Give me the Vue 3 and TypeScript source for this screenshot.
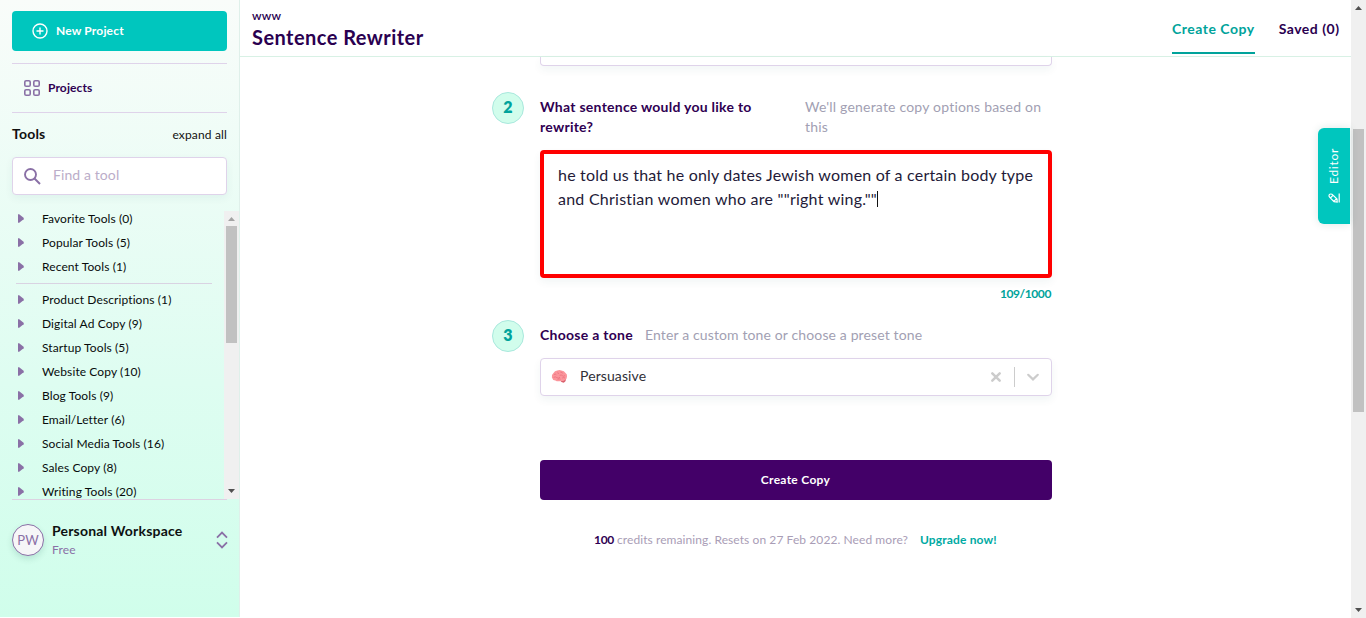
<script setup lang="ts">
import { ref } from 'vue'

interface ToolGroup {
  name: string
  count: number
}

const pinned: ToolGroup[] = [
  { name: 'Favorite Tools', count: 0 },
  { name: 'Popular Tools', count: 5 },
  { name: 'Recent Tools', count: 1 },
]

const groups: ToolGroup[] = [
  { name: 'Product Descriptions', count: 1 },
  { name: 'Digital Ad Copy', count: 9 },
  { name: 'Startup Tools', count: 5 },
  { name: 'Website Copy', count: 10 },
  { name: 'Blog Tools', count: 9 },
  { name: 'Email/Letter', count: 6 },
  { name: 'Social Media Tools', count: 16 },
  { name: 'Sales Copy', count: 8 },
  { name: 'Writing Tools', count: 20 },
]

const lines: string[] = [
  'he told us that he only dates Jewish women of a certain body type',
  'and Christian women who are ""right wing.""',
]
const used = ref<number>(109)
</script>

<template>
  <div class="page">
    <aside class="sidebar">
      <button class="new-project">
        <svg width="16" height="16" viewBox="0 0 16 16" fill="none" stroke="#fff" stroke-width="1.4">
          <circle cx="8" cy="8" r="7" />
          <path d="M8 4.5v7M4.5 8h7" />
        </svg>
        <span class="t-new">New Project</span>
      </button>

      <div class="projects">
        <svg width="16" height="16" viewBox="0 0 16 16" fill="none" stroke="#8a70a6" stroke-width="1.6">
          <rect x="0.8" y="0.8" width="5.4" height="5.4" rx="1.3" />
          <rect x="9.8" y="0.8" width="5.4" height="5.4" rx="1.3" />
          <rect x="0.8" y="9.8" width="5.4" height="5.4" rx="1.3" />
          <rect x="9.8" y="9.8" width="5.4" height="5.4" rx="1.3" />
        </svg>
        <span class="t-projects">Projects</span>
      </div>

      <div class="tools-head">
        <span class="t-tools">Tools</span>
        <span class="t-expand">expand all</span>
      </div>

      <div class="search">
        <svg width="17" height="17" viewBox="0 0 17 17" fill="none" stroke="#8a70a6" stroke-width="1.9">
          <circle cx="6.5" cy="6.5" r="5.5" />
          <path d="M10.5 10.5L16 16" />
        </svg>
        <span class="t-find">Find a tool</span>
      </div>

      <div class="tool-area">
        <div class="tool-list">
          <div v-for="g in pinned" :key="g.name" class="row">
            <svg width="6" height="9" viewBox="0 0 6 9"><path d="M0 0.3Q0.6 0 1.2 0.3L5.6 3.7Q6 4.5 5.6 5.3L1.2 8.7Q0.6 9 0 8.7Z" fill="#8a70a6" /></svg>
            <span>{{ g.name }} ({{ g.count }})</span>
          </div>
          <div class="rule"></div>
          <div v-for="g in groups" :key="g.name" class="row">
            <svg width="6" height="9" viewBox="0 0 6 9"><path d="M0 0.3Q0.6 0 1.2 0.3L5.6 3.7Q6 4.5 5.6 5.3L1.2 8.7Q0.6 9 0 8.7Z" fill="#8a70a6" /></svg>
            <span>{{ g.name }} ({{ g.count }})</span>
          </div>
        </div>
        <div class="bar">
          <svg class="arrow" width="15" height="15" viewBox="0 0 15 15"><path d="M4 10L7.5 6L11 10Z" fill="#a3a3a3" /></svg>
          <div class="thumb side-thumb"></div>
          <div class="fill"></div>
          <svg class="arrow" width="15" height="15" viewBox="0 0 15 15"><path d="M4 5L7.5 9L11 5Z" fill="#505050" /></svg>
        </div>
      </div>

      <div class="workspace">
        <div class="avatar">PW</div>
        <div class="ws-text">
          <span class="t-ws">Personal Workspace</span>
          <span class="t-free">Free</span>
        </div>
        <svg class="switch" width="12" height="18" viewBox="0 0 12 18" fill="none" stroke="#8a70a6" stroke-width="1.8">
          <path d="M1 6.6L6 1.6L11 6.6M1 11.4L6 16.4L11 11.4" />
        </svg>
      </div>
    </aside>

    <main class="main">
      <header class="header">
        <div class="titles">
          <span class="t-www">www</span>
          <span class="t-title">Sentence Rewriter</span>
        </div>
        <nav class="tabs">
          <span class="tab active">Create Copy</span>
          <span class="tab saved">Saved (0)</span>
        </nav>
      </header>

      <section class="form">
        <div class="prev-input"></div>

        <div class="step step-two">
          <div class="num">2</div>
          <div class="label t-q">What sentence would you like to<br />rewrite?</div>
          <div class="hint t-q-hint">We'll generate copy options based on<br />this</div>
        </div>
        <div class="textarea">
          <div class="line l1">{{ lines[0] }}</div>
          <div class="line l2">{{ lines[1] }}<i class="caret"></i></div>
        </div>
        <div class="counter"><span>{{ used }}/1000</span></div>

        <div class="step step-three">
          <div class="num">3</div>
          <div class="label t-tone">Choose a tone</div>
          <div class="hint t-tone-hint">Enter a custom tone or choose a preset tone</div>
        </div>
        <div class="select">
          <svg class="brain" width="17" height="15" viewBox="0 0 17 15">
            <path d="M10 10.5L14.8 9.8Q15.2 12.6 12.6 13.8Q10.2 13.6 9 11.6Z" fill="#d9606d" />
            <path d="M0.9 8.4Q0.3 5.6 2.5 4Q3.6 1.8 6.3 1.6Q8.2 0.7 10.4 1.4Q13.4 1.6 14.3 3.7Q16.6 5 16 7.7Q16 10.4 13.6 11.2Q11.7 12.5 9.8 11.9Q6.5 13 4.4 11.5Q1.4 11 0.9 8.4Z" fill="#fb959b" />
            <path d="M3 5.5Q4.4 4.6 5.4 5.8M6.4 3.1Q7.6 3.6 7.3 5M9.4 3.1Q11.4 2.8 11.6 4.5M2.6 8.4Q4.4 7.2 5.8 8.6T9 8.2M8.6 6.3Q10.4 5.5 11.6 6.8T14 6.4M6.6 10.4Q8.2 9.4 9.6 10.2M11.2 9Q12.6 8.2 14 9" fill="none" stroke="#e86c79" stroke-width="0.7" />
          </svg>
          <span class="t-persuasive">Persuasive</span>
          <div class="controls">
            <svg width="12" height="12" viewBox="0 0 12 12" stroke="#ccc" stroke-width="2.5" stroke-linecap="round"><path d="M2.3 2.3L9.7 9.7M9.7 2.3L2.3 9.7" /></svg>
            <div class="sep"></div>
            <svg class="chev" width="14" height="10" viewBox="0 0 14 10" fill="none" stroke="#ccc" stroke-width="2.2" stroke-linecap="round"><path d="M2.2 2.8L7 7.4L11.8 2.8" /></svg>
          </div>
        </div>

        <button class="create"><span>Create Copy</span></button>

        <p class="credits">
          <b>100</b><span class="t-credits">credits remaining. Resets on 27 Feb 2022. Need more?</span><a>Upgrade now!</a>
        </p>
      </section>

      <div class="editor-tab">
        <span>Editor</span>
        <svg width="12" height="10" viewBox="0 0 12 10" fill="none" stroke="#fff" stroke-width="1.2">
          <path d="M1 2.6Q1 1 2.8 1Q4 1 5 2.2L9 6L9.2 9L6 8.6L1.8 4.4Q1 3.6 1 2.6ZM5.2 2.2L2.4 5M8.6 5.6L5.8 8.4" />
          <path d="M11.2 0.5V9.5" />
        </svg>
      </div>
    </main>

    <div class="bar page-bar">
      <svg class="arrow" width="15" height="15" viewBox="0 0 15 15"><path d="M4 10L7.5 6L11 10Z" fill="#505050" /></svg>
      <div class="gap"></div>
      <div class="thumb main-thumb"></div>
      <div class="fill"></div>
      <svg class="arrow" width="15" height="15" viewBox="0 0 15 15"><path d="M4 5L7.5 9L11 5Z" fill="#505050" /></svg>
    </div>
  </div>
</template>

<style>
html,
body {
  margin: 0;
  overflow: hidden;
  background: #fff;
}
</style>

<style scoped>
.page {
  display: flex;
  width: 1366px;
  height: 618px;
  overflow: hidden;
  font-family: Lato, "Open Sans", sans-serif;
  font-variant-ligatures: none;
  color: #1b1b1b;
  white-space: nowrap;
}
.page * {
  box-sizing: border-box;
}
svg {
  display: block;
  flex: none;
}
button {
  font: inherit;
  border: 0;
}

/* sidebar */
.sidebar {
  width: 240px;
  height: 617px;
  flex: none;
  display: flex;
  flex-direction: column;
  padding: 11px 0 0 12px;
  border-right: 1px solid #dff0ea;
  background: linear-gradient(180deg, #f9fcfa 0%, #defdf1 62%, #d0feeb 100%);
}
.new-project {
  width: 215px;
  height: 40px;
  flex: none;
  display: flex;
  align-items: center;
  gap: 8px;
  padding: 0 20px;
  border-radius: 4px;
  background: #00c6be;
  color: #fff;
}
.t-new {
  padding-bottom: 2px;
  font-size: 12px;
  font-weight: 700;
  letter-spacing: 0.17px;
}
.projects {
  width: 215px;
  height: 50px;
  flex: none;
  margin-top: 12px;
  display: flex;
  align-items: center;
  gap: 8px;
  padding-left: 12px;
  border-top: 1px solid #dfd3ea;
  border-bottom: 1px solid #dfd3ea;
}
.t-projects {
  padding-bottom: 2px;
  font-size: 12px;
  font-weight: 700;
  letter-spacing: 0.12px;
  color: #2f0052;
}
.tools-head {
  width: 215px;
  height: 44px;
  flex: none;
  display: flex;
  align-items: center;
  justify-content: space-between;
  color: #111;
}
.t-tools {
  font-size: 14px;
  font-weight: 700;
  letter-spacing: 0.2px;
  padding-bottom: 3px;
}
.t-expand {
  padding-bottom: 2px;
  font-size: 12px;
  letter-spacing: 0.15px;
}
.search {
  width: 215px;
  height: 38px;
  flex: none;
  display: flex;
  align-items: center;
  gap: 12px;
  padding-left: 11px;
  border: 1px solid #dfd3ea;
  border-radius: 4px;
  background: #fff;
  box-shadow: 0 3px 8px rgba(0, 90, 80, 0.06);
}
.t-find {
  font-size: 14px;
  letter-spacing: 0.1px;
  padding-bottom: 3px;
  color: #bbadc9;
}
.tool-area {
  height: 289px;
  flex: none;
  margin-top: 16px;
  display: flex;
  justify-content: space-between;
  background: linear-gradient(#dcd3e2, #dcd3e2) 0 100% / 215px 1px no-repeat;
}
.tool-list {
  width: 200px;
  height: 288px;
  overflow: hidden;
  padding-left: 4px;
  display: flex;
  flex-direction: column;
  gap: 8px;
}
.row {
  height: 16px;
  flex: none;
  display: flex;
  align-items: center;
  gap: 18px;
  padding-left: 2px;
  font-size: 12px;
  line-height: 16px;
  letter-spacing: 0.1px;
  color: #080c0c;
}
.row svg {
  margin-bottom: 1px;
}
.rule {
  height: 1px;
  flex: none;
  background: #d9d3e2;
}
.bar {
  width: 15px;
  height: 288px;
  flex: none;
  display: flex;
  flex-direction: column;
  background: #f0f0f0;
}
.thumb {
  width: 11px;
  flex: none;
  align-self: center;
  background: #c1c1c1;
}
.side-thumb {
  height: 117px;
}
.fill {
  flex: 1;
}
.workspace {
  width: 215px;
  margin-top: 22px;
  height: 36px;
  display: flex;
  align-items: center;
}
.switch {
  margin-right: -0.5px;
}
.avatar {
  width: 32px;
  height: 32px;
  border: 1px solid #8a70a6;
  border-radius: 50%;
  background: #f6f6f8;
  color: #8a70a6;
  font-size: 13px;
  line-height: 31px;
  text-align: center;
  box-shadow: 0 3px 6px rgba(0, 80, 70, 0.14);
}
.ws-text {
  flex: 1;
  display: flex;
  flex-direction: column;
  padding-left: 8px;
}
.t-ws {
  font-size: 14px;
  line-height: 18px;
  font-weight: 700;
  letter-spacing: 0.2px;
  color: #0d1111;
}
.t-free {
  font-size: 12px;
  line-height: 19px;
  letter-spacing: 0.2px;
  color: #8a70a6;
}

/* main column */
.main {
  position: relative;
  width: 1111px;
  flex: none;
}
.header {
  height: 57px;
  display: flex;
  justify-content: space-between;
  padding: 0 11.5px 0 12px;
  border-bottom: 1px solid #d8f1e5;
  color: #2a0050;
}
.titles {
  display: flex;
  flex-direction: column;
  padding-top: 8px;
}
.t-www {
  font-size: 12px;
  line-height: 16px;
  font-weight: 600;
  letter-spacing: 0.2px;
}
.t-title {
  font-size: 20px;
  line-height: 26px;
  font-weight: 700;
  letter-spacing: 0.45px;
}
.tabs {
  display: flex;
  gap: 24px;
}
.tab {
  height: 54px;
  line-height: 58px;
  font-size: 14px;
  font-weight: 700;
  letter-spacing: 0.5px;
}
.active {
  color: #00a39b;
  border-bottom: 2px solid #00a39b;
}
.form {
  width: 512px;
  margin-left: 300px;
}
.prev-input {
  height: 9px;
  border: 1px solid #dfd3ea;
  border-top: 0;
  border-radius: 0 0 4px 4px;
  box-shadow: 0 4px 8px rgba(0, 90, 80, 0.06);
}
.step {
  display: flex;
  align-items: flex-start;
  margin-left: -48px;
  font-size: 14px;
  line-height: 20px;
}
.step-two {
  margin-top: 26px;
  height: 58px;
}
.step-three {
  margin-top: 18px;
  height: 38px;
}
.num {
  width: 32px;
  height: 32px;
  flex: none;
  margin-right: 16px;
  border: 1px solid #a9e8dd;
  border-radius: 50%;
  background: #d1fdec;
  color: #00a39b;
  font-size: 16px;
  font-weight: 800;
  line-height: 28px;
  text-align: center;
}
.label {
  padding-top: 5px;
  font-weight: 700;
  color: #2f0052;
}
.hint {
  padding-top: 5px;
  color: #a29fb3;
}
.t-q {
  width: 265px;
  letter-spacing: 0.26px;
}
.t-q-hint {
  letter-spacing: 0.2px;
}
.t-tone {
  width: 105px;
  letter-spacing: 0.28px;
}
.t-tone-hint {
  letter-spacing: 0.13px;
}
.textarea {
  height: 128px;
  padding: 9px 14px;
  border: 4px solid #f00;
  border-radius: 4px;
  box-shadow: 0 4px 8px rgba(0, 90, 80, 0.06);
  color: #231a38;
  font-size: 16px;
  line-height: 24px;
  letter-spacing: 0.2px;
}
.line {
  display: flex;
  align-items: center;
}
.l2 {
  letter-spacing: 0.24px;
}
.caret {
  width: 1px;
  height: 16px;
  background: #111;
}
.counter {
  height: 24px;
  padding: 7px 1px 0 0;
  text-align: right;
  font-size: 12px;
  line-height: 18px;
  font-weight: 700;
  letter-spacing: -0.4px;
  color: #00a39b;
}
.select {
  height: 38px;
  display: flex;
  align-items: center;
  padding-left: 10px;
  border: 1px solid #dfd3ea;
  border-radius: 4px;
  background: #fff;
  box-shadow: 0 4px 8px rgba(0, 90, 80, 0.06);
}
.brain {
  margin-bottom: 1px;
}
.t-persuasive {
  margin-left: 12px;
  padding-bottom: 3px;
  font-size: 14px;
  letter-spacing: 0.1px;
  color: #303038;
}
.controls {
  margin-left: auto;
  display: flex;
  align-items: center;
  padding-right: 11px;
}
.sep {
  width: 1px;
  height: 20px;
  margin: 0 11px 0 12px;
  background: #ccc;
}
.create {
  width: 512px;
  height: 40px;
  display: block;
  margin-top: 64px;
  padding: 0 1px 2px 0;
  border-radius: 4px;
  background: #430068;
  color: #fff;
  font-size: 12px;
  font-weight: 700;
  letter-spacing: 0.3px;
}
.credits {
  margin: 31px 0 0 54px;
  display: flex;
  font-size: 12px;
  line-height: 18px;
  letter-spacing: 0.08px;
  color: #a99db6;
}
.credits b {
  width: 23px;
  letter-spacing: -0.3px;
  color: #2f0052;
}
.t-credits {
  width: 303px;
}
.credits a {
  color: #00aaa3;
  font-weight: 700;
  letter-spacing: 0.15px;
}
.editor-tab {
  position: absolute;
  right: 1px;
  top: 128px;
  width: 32px;
  height: 96px;
  display: flex;
  flex-direction: column;
  align-items: center;
  justify-content: center;
  gap: 9px;
  padding-bottom: 1px;
  border-radius: 6px 0 0 6px;
  background: #00c6be;
  color: #fff;
  box-shadow: 0 0 8px rgba(0, 90, 80, 0.14);
}
.editor-tab span {
  writing-mode: vertical-rl;
  transform: rotate(180deg);
  font-size: 12px;
  line-height: 16px;
  letter-spacing: 0.7px;
}

.page-bar {
  height: 618px;
}
.gap {
  height: 114px;
  flex: none;
}
.main-thumb {
  height: 283px;
}
</style>
